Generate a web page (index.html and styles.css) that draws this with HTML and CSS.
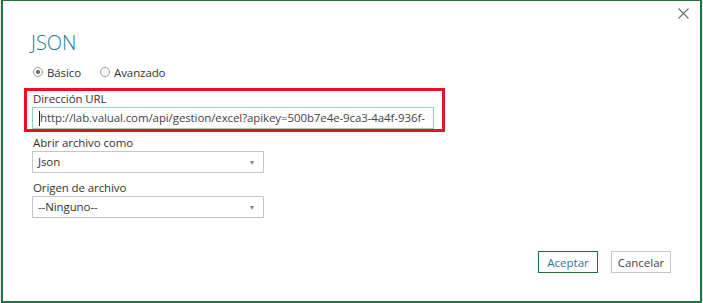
FILE: index.html
```html
<!DOCTYPE html>
<html lang="es">
<head>
    <meta charset="UTF-8">
    <title>JSON</title>
    <link rel="stylesheet" href="styles.css">
</head>
<body>
    <div class="dialog">
        <svg class="close" width="11" height="11" viewBox="0 0 11 11">
            <path d="M0.5 0.5 L10.5 10.5 M10.5 0.5 L0.5 10.5" stroke="#6f6f6f" stroke-width="1.2" fill="none"/>
        </svg>
        <div class="content">
            <h1 class="title">JSON</h1>

            <div class="modes">
                <label class="mode"><span class="radio checked"></span>Básico</label>
                <label class="mode"><span class="radio"></span>Avanzado</label>
            </div>

            <div class="field url-field">
                <label class="field-label">Dirección URL</label>
                <div class="text-box"><span class="caret"></span>http://lab.valual.com/api/gestion/excel?apikey=500b7e4e-9ca3-4a4f-936f-</div>
                <div class="highlight"></div>
            </div>

            <div class="field">
                <label class="field-label">Abrir archivo como</label>
                <div class="select-box"><span>Json</span><span class="arrow">&#9662;</span></div>
            </div>

            <div class="field">
                <label class="field-label">Origen de archivo</label>
                <div class="select-box"><span>--Ninguno--</span><span class="arrow">&#9662;</span></div>
            </div>
        </div>

        <div class="buttons">
            <button type="button" class="button primary">Aceptar</button>
            <button type="button" class="button">Cancelar</button>
        </div>
    </div>
</body>
</html>
```

FILE: styles.css
```css
body {
    margin: 0;
    background-color: #e9e9e9;
    font-family: "Open Sans", Arial, sans-serif;
    font-size: 11.5px;
    letter-spacing: -0.1px;
    color: #333;
}

.dialog {
    position: relative;
    box-sizing: border-box;
    width: 701px;
    height: 303px;
    margin-left: 1px;
    background-color: #fff;
    border: 2px solid #217346;
    border-top-width: 1px;
}

.close {
    position: absolute;
    top: 7px;
    right: 11px;
}

.content {
    padding: 29px 0 0 28px;
}

.title {
    margin: 0 0 7px 0;
    font-size: 20px;
    font-weight: 300;
    letter-spacing: 0;
    line-height: 26px;
    color: #2a7a8c;
}

.modes {
    display: flex;
    gap: 19px;
    margin-left: 2px;
    height: 18px;
    align-items: center;
}

.mode {
    display: flex;
    align-items: center;
    gap: 4px;
}

.radio {
    box-sizing: border-box;
    width: 10px;
    height: 10px;
    border: 1px solid #999;
    border-radius: 50%;
    position: relative;
}

.radio.checked::after {
    content: "";
    position: absolute;
    left: 2px;
    top: 2px;
    width: 4px;
    height: 4px;
    border-radius: 50%;
    background-color: #666;
}

.field {
    position: relative;
}

.url-field {
    margin-top: 9px;
}

.field-label {
    display: block;
    margin-left: 2px;
    line-height: 17px;
}

.text-box,
.select-box {
    box-sizing: border-box;
    height: 22px;
    margin-left: 1px;
    padding: 0 5px;
    line-height: 20px;
    white-space: nowrap;
    overflow: hidden;
}

.text-box {
    display: flex;
    align-items: center;
    width: 402px;
    margin-bottom: 5px;
    border: 1px solid #95d3b4;
    color: #444;
    padding-left: 6px;
}

.caret {
    flex: none;
    width: 1px;
    height: 15px;
    background-color: #222;
}

.select-box {
    display: flex;
    justify-content: space-between;
    width: 232px;
    margin-bottom: 6px;
    padding-right: 9px;
    border: 1px solid #c6c6c6;
}

.arrow {
    font-size: 8px;
    color: #888;
}

.highlight {
    position: absolute;
    left: -7px;
    top: -2px;
    width: 421px;
    height: 44px;
    border: 3px solid #e81123;
    box-sizing: border-box;
}

.buttons {
    position: absolute;
    right: 29px;
    bottom: 28px;
    display: flex;
    gap: 13px;
}

.button {
    box-sizing: border-box;
    width: 60px;
    height: 22px;
    padding: 0;
    font-family: "Open Sans", Arial, sans-serif;
    font-size: 11.5px;
    color: #444;
    background-color: #fff;
    border: 1px solid #c6c6c6;
    cursor: pointer;
}

.button.primary {
    color: #2a7a8c;
    border: 1px solid #217346;
}
```
